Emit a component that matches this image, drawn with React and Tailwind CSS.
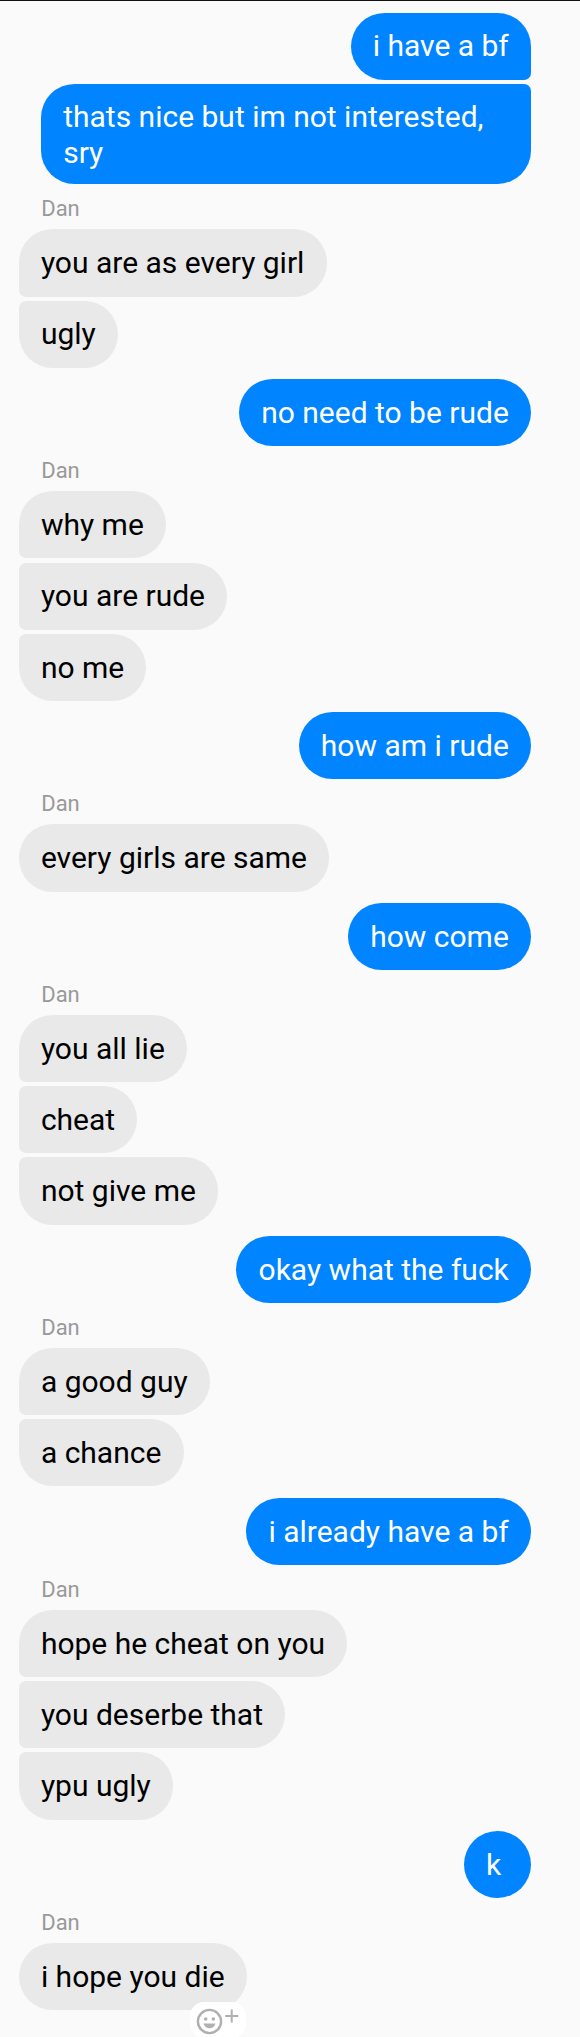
const groups = [
  { mine: true, messages: ["i have a bf", "thats nice but im not interested, sry"] },
  { mine: false, messages: ["you are as every girl", "ugly"] },
  { mine: true, messages: ["no need to be rude"] },
  { mine: false, messages: ["why me", "you are rude", "no me"] },
  { mine: true, messages: ["how am i rude"] },
  { mine: false, messages: ["every girls are same"] },
  { mine: true, messages: ["how come"] },
  { mine: false, messages: ["you all lie", "cheat", "not give me"] },
  { mine: true, messages: ["okay what the fuck"] },
  { mine: false, messages: ["a good guy", "a chance"] },
  { mine: true, messages: ["i already have a bf"] },
  { mine: false, messages: ["hope he cheat on you", "you deserbe that", "ypu ugly"] },
  { mine: true, messages: ["k"] },
  { mine: false, messages: ["i hope you die"], react: true },
];

function ReactButton() {
  return (
    <div className="absolute right-px -bottom-[28px] flex h-[36px] w-[56px] rounded-[14px] bg-white">
      <svg viewBox="0 0 56 36" className="h-[36px] w-[56px]" fill="none">
        <circle cx="19.5" cy="19.5" r="11.6" stroke="#b0b0b0" strokeWidth="2.4" />
        <circle cx="15.7" cy="17" r="1.8" fill="#b0b0b0" />
        <circle cx="23.3" cy="17" r="1.8" fill="#b0b0b0" />
        <path d="M13.5 21.5h12c-.8 3.2-3.2 4.8-6 4.8s-5.2-1.6-6-4.8z" fill="#b0b0b0" />
        <path d="M41.7 7.5v13M35.2 14h13" stroke="#b0b0b0" strokeWidth="2" />
      </svg>
    </div>
  );
}

function Bubble({ text, mine, first, last, react }) {
  const shape = mine
    ? `${first ? "" : "rounded-tr-[7px]"} ${last ? "" : "rounded-br-[7px]"} bg-[#0084ff] text-white`
    : `${first ? "" : "rounded-tl-[7px]"} ${last ? "" : "rounded-bl-[7px]"} bg-[#e9e9e9] text-black`;
  return (
    <div
      className={`relative min-h-[67.1px] min-w-[67.1px] max-w-[490px] rounded-[33.5px] px-[22.2px] pt-[15.8px] pb-[14.2px] text-[30px] leading-[35.4px] ${shape}`}
    >
      {text}
      {react && <ReactButton />}
    </div>
  );
}

function Group({ mine, messages, react }) {
  return (
    <div className={`flex flex-col ${mine ? "mt-[11.5px] items-end" : "items-start"}`}>
      {!mine && (
        <div className="h-[45px] pt-[12px] pl-[22.5px] text-[22px] leading-[26px] text-[#999999]">Dan</div>
      )}
      <div className={`flex flex-col gap-[4.1px] ${mine ? "items-end" : "items-start"}`}>
        {messages.map((text, i) => (
          <Bubble
            key={text}
            text={text}
            mine={mine}
            react={react}
            first={i === 0}
            last={i === messages.length - 1}
          />
        ))}
      </div>
    </div>
  );
}

export default function App() {
  return (
    <main className="h-[2037px] overflow-hidden border-t border-[#111111] bg-[#fafafa] pr-[49px] pl-[18.7px] font-['Roboto',sans-serif]">
      {groups.map((group, i) => (
        <Group key={i} {...group} />
      ))}
    </main>
  );
}
